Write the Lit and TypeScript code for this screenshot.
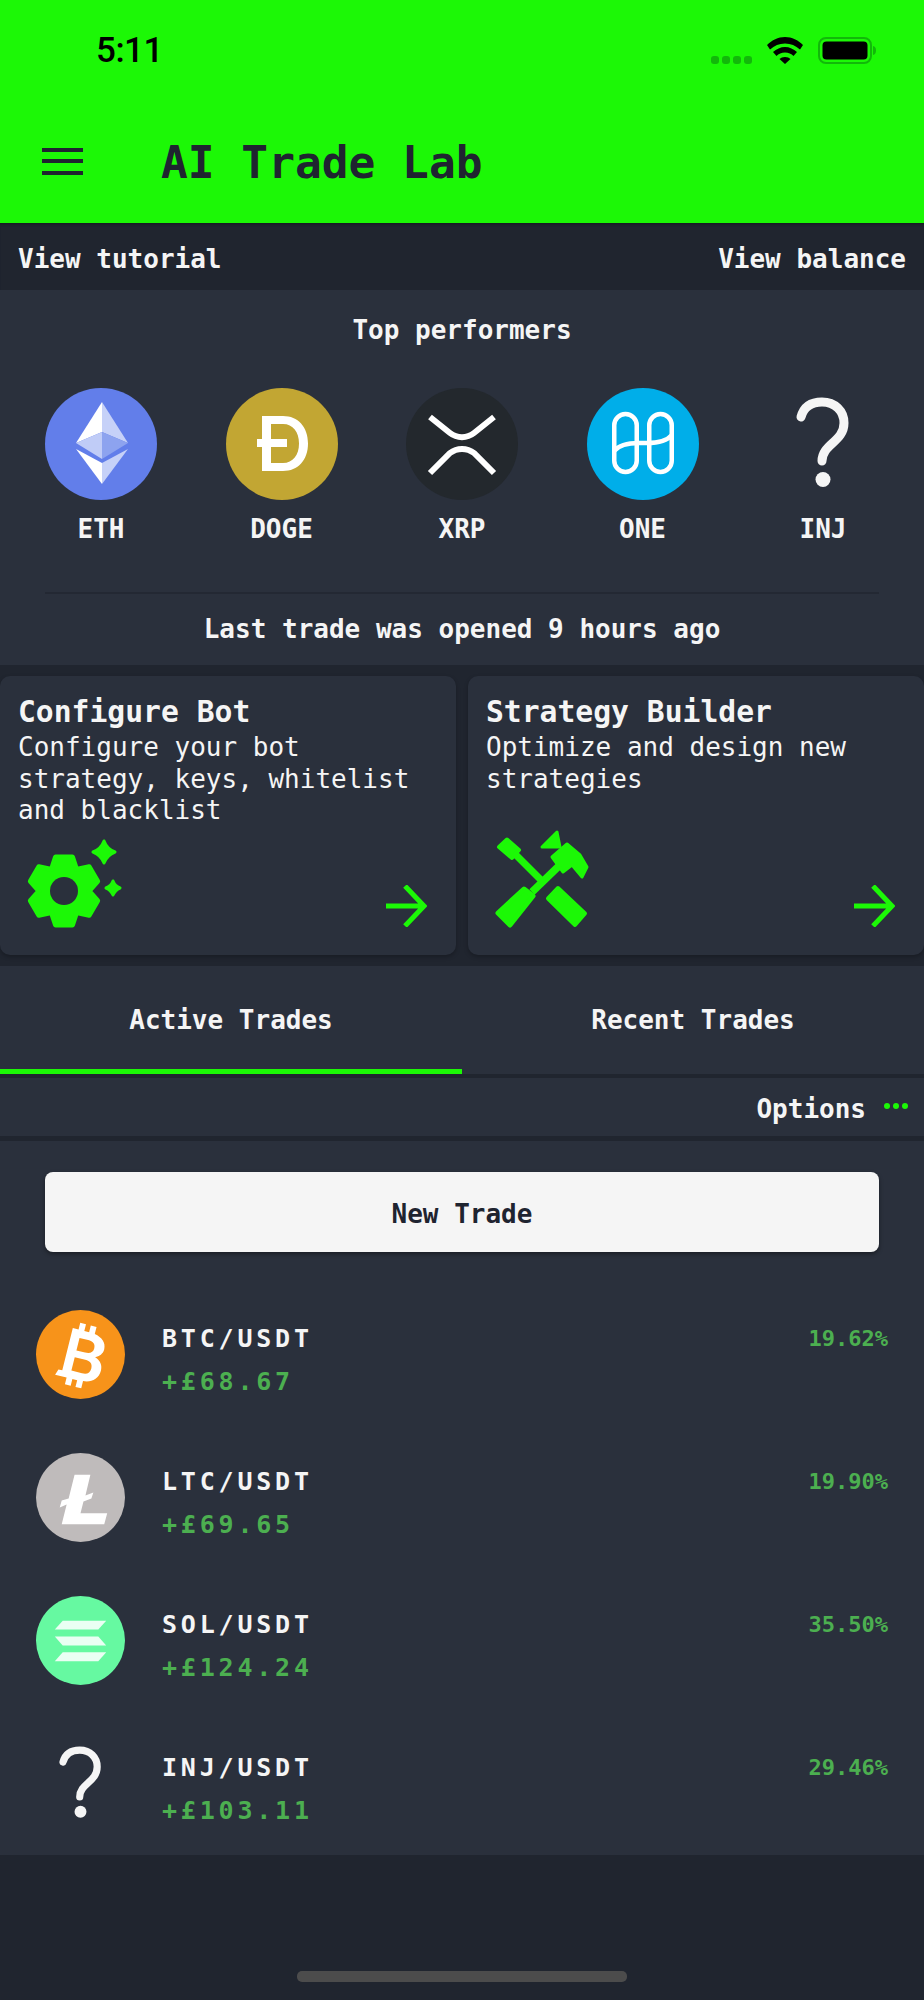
import { LitElement, html, css, svg, unsafeCSS } from "lit";
import { customElement } from "lit/decorators.js";

const GREEN = "#1cf806";
const G = unsafeCSS(GREEN);

const eth = svg`<svg viewBox="0 0 112 112" class="coin"><circle cx="56" cy="56" r="56" fill="#627eea"/>
<path d="M57 14L31 55l26-11z" fill="#fff"/><path d="M57 14v30l26 11z" fill="#c6d1f8"/>
<path d="M31 55l26-11v27z" fill="#c0ccf7"/><path d="M83 55L57 44v27z" fill="#8da3ef"/>
<path d="M31 61l26 14v21z" fill="#fff"/><path d="M83 61L57 75v21z" fill="#c6d1f8"/></svg>`;
const doge = svg`<svg viewBox="0 0 112 112" class="coin"><circle cx="56" cy="56" r="56" fill="#c2a633"/>
<path fill="#fff" fill-rule="evenodd" d="M36 28h21c15 0 25 11 25 27.500S72 83 57 83H36V59h-5v-8h5zm9 8v15h16v8H45v16h12c10 0 16-8 16-19.500S67 36 57 36z"/></svg>`;
const xrp = svg`<svg viewBox="0 0 112 112" class="coin"><circle cx="56" cy="56" r="56" fill="#23282d"/>
<path fill="none" stroke="#fff" stroke-width="6" d="M24 29L44 45c7 5.500 17 5.500 24 0L88 29M24 85L44 65c7-5.500 17-5.500 24 0L88 85"/></svg>`;
const one = svg`<svg viewBox="0 0 112 112" class="coin"><circle cx="56" cy="56" r="56" fill="#00aee9"/>
<g fill="none" stroke="#fff" stroke-width="4.500"><rect x="27.250" y="26" width="22.500" height="58" rx="11.250"/><rect x="62.250" y="26" width="22.500" height="58" rx="11.250"/><path d="M27 63c5-6 14-8 25-8h8c11 0 20-2 25-8"/></g></svg>`;
const q = svg`<svg viewBox="0 0 112 112" class="coin"><path fill="none" stroke="#f5f5f5" stroke-width="9" stroke-linecap="round" d="M34 29C37 18 45 14 55 14c13 0 22 9 22 21 0 19-22 21-22 38"/><circle cx="56" cy="91.500" r="7.500" fill="#f5f5f5"/></svg>`;
const btc = svg`<svg viewBox="0 0 90 90" class="coin"><circle cx="45" cy="45" r="45" fill="#f7931a"/>
<g transform="rotate(14 45 45)"><path fill="#fff" fill-rule="evenodd" d="M31 21h6v-7h6v7h5v-7h6v7.500c8 1.500 13 6 13 12.500 0 5-3 8-7 10 6 2 9 6 9 12 0 9-7 14-15 14.500V78h-6v-7h-5v7h-6v-7H25l2-6h4zm9 8v13h9c5 0 8-2 8-6.500S54 29 49 29zm0 20v14h11c5 0 8-2 8-7s-3-7-8-7z"/></g></svg>`;
const ltc = svg`<svg viewBox="0 0 90 90" class="coin"><circle cx="45" cy="45" r="45" fill="#bfbbbb"/>
<path fill="#fff" d="M39 22h16l-5 21 8-3-2 6-8 3-3 12h27l-3 11H26l5-20-7 3 2-7 7-2z"/></svg>`;
const sol = svg`<svg viewBox="0 0 90 90" class="coin"><circle cx="45" cy="45" r="45" fill="#66f9a1"/>
<g fill="#eafff3"><path d="M27 25h44l-8 9H19z"/><path d="M19 41h44l8 9H27z"/><path d="M27 57h44l-8 9H19z"/></g></svg>`;

const gearPoints = (() => {
  const pts: string[] = [];
  const p = (r: number, deg: number) => {
    const a = (deg * Math.PI) / 180;
    pts.push(`${(38 + r * Math.cos(a)).toFixed(2)},${(62 + r * Math.sin(a)).toFixed(2)}`);
  };
  for (let k = 0; k < 6; k++) {
    const c = -90 + 60 * k;
    p(25, c - 30);
    p(35, c - 14);
    p(35, c + 14);
  }
  return pts.join(" ");
})();

const gear = svg`<svg viewBox="0 0 100 100" width="100" height="100" class="ico">
<polygon points="${gearPoints}" fill="${GREEN}" stroke="${GREEN}" stroke-width="5" stroke-linejoin="round"/>
<circle cx="38" cy="62" r="14" fill="#2a303c"/>
<g fill="${GREEN}" stroke="${GREEN}" stroke-width="3" stroke-linejoin="round">
<path d="M78 12Q81 20 89 23Q81 26 78 34Q75 26 67 23Q75 20 78 12z"/>
<path d="M87 52Q89 57 94 59Q89 61 87 66Q85 61 80 59Q85 57 87 52z"/></g></svg>`;

const tools = svg`<svg viewBox="0 0 100 100" width="100" height="100" class="ico">
<g fill="${GREEN}" stroke="${GREEN}" stroke-linejoin="round">
<path stroke-width="4" d="M5 18l8-7.500L25 21l-7 8z"/>
<line x1="20" y1="24" x2="48" y2="52" stroke-width="7"/>
<path stroke-width="5" d="M4 84L30 60l9 7L16 96z"/>
<line x1="38" y1="63" x2="68" y2="34" stroke-width="7.500"/>
<path stroke-width="3" d="M58 28L73 15l13 11 7 12-5 10-10-12-9 7z"/>
<path stroke-width="3" d="M48 18L63 3l3 15z"/>
<path stroke-width="4" d="M54 69.500L64 59l27 25.500L81 96z"/>
</g></svg>`;

const arrow = html`<svg viewBox="0 0 41 42" width="41" height="42" class="arrow"><path fill="none" stroke="${GREEN}" stroke-width="5" d="M0 21h38M19 1l19 20-19 20"/></svg>`;

const performers = [["ETH", eth], ["DOGE", doge], ["XRP", xrp], ["ONE", one], ["INJ", q]] as const;
const trades = [
  ["BTC/USDT", "+£68.67", "19.62%", btc],
  ["LTC/USDT", "+£69.65", "19.90%", ltc],
  ["SOL/USDT", "+£124.24", "35.50%", sol],
  ["INJ/USDT", "+£103.11", "29.46%", q],
] as const;

@customElement("app-root")
export class AppRoot extends LitElement {
  static styles = css`
    :host { display: block; width: 924px; height: 2000px; background: #20252f; font-family: "DejaVu Sans Mono", monospace; color: #f5f5f5; overflow: hidden; position: relative; }
    * { box-sizing: border-box; }
    .header { height: 223px; background: ${G}; color: #1f2430; display: flex; flex-direction: column; }
    .status { height: 123px; padding: 31px 48px 0 96px; display: flex; align-items: flex-start; justify-content: space-between; color: #000; }
    .time { font: 500 35px/40px Roboto, sans-serif; letter-spacing: -.5px; }
    .sys { display: flex; align-items: center; gap: 15px; height: 40px; margin-top: -1px; }
    .dots { display: flex; gap: 3px; margin-top: 20px; }
    .dots i { width: 8px; height: 8px; border-radius: 3px; background: #12b80a; display: block; }
    .bar { display: flex; align-items: center; padding: 0 0 0 42px; height: 78px; }
    .menu { width: 41px; height: 27px; display: flex; flex-direction: column; justify-content: space-between; margin-right: 78px; margin-top: -2px; }
    .menu i { display: block; height: 4px; background: #1f2430; }
    .title { font-size: 44.500px; font-weight: 700; line-height: 1; margin-top: 3px; }
    .top { height: 67px; display: flex; justify-content: space-between; align-items: center; padding: 5px 18px 0; font-size: 26px; font-weight: 700; line-height: 1; box-shadow: inset 0 3px 3px -2px #14181f; }
    .panel { background: #2a303c; }
    .perf { height: 375px; display: flex; flex-direction: column; align-items: center; }
    .h { font-size: 26px; font-weight: 700; margin-top: 24px; line-height: 32px; }
    .coins { width: 100%; display: grid; grid-template-columns: repeat(5, 112px); justify-content: space-between; padding: 0 45px; margin-top: 42px; }
    .pc { display: flex; flex-direction: column; align-items: center; }
    .coin { display: block; width: 100%; aspect-ratio: 1; }
    .pc .lab { margin-top: 10px; font-size: 26px; font-weight: 700; line-height: 38px; }
    .rule { width: 834px; height: 2px; background: #232833; margin-top: 44px; }
    .last { font-size: 26px; font-weight: 700; margin-top: 19px; line-height: 32px; }
    .cards { display: grid; grid-template-columns: 456px 456px; gap: 12px; padding: 11px 0; }
    .card { height: 279px; position: relative; background: #2a303c; border-radius: 10px; box-shadow: 0 2px 4px rgba(0,0,0,.25); padding: 18px 18px 0; }
    .card h2 { margin: 0; font-size: 29.700px; line-height: 36px; font-weight: 700; }
    .card p { margin: 2px 0 0; font-size: 26px; line-height: 31.500px; white-space: pre-line; }
    .ico { position: absolute; left: 26px; bottom: 26px; }
    .arrow { position: absolute; right: 29px; bottom: 28px; }
    .tabs { display: grid; grid-template-columns: 1fr 1fr; height: 108px; background: #2a303c; }
    .tab { position: relative; display: flex; align-items: center; justify-content: center; font-size: 26px; font-weight: 700; padding-top: 0; }
    .tab.on::after { content: ""; position: absolute; left: 0; right: 0; bottom: 0; height: 5px; background: ${G}; }
    .opt { margin-top: 4px; height: 58px; background: #2a303c; display: flex; align-items: center; justify-content: flex-end; padding: 3px 16px 0 0; gap: 18px; font-size: 26px; font-weight: 700; }
    .more { display: flex; gap: 3px; margin-top: -5px; }
    .more i { width: 6px; height: 6px; border-radius: 50%; background: ${G}; display: block; }
    .list { margin-top: 5px; height: 714px; background: #2a303c; padding-top: 31px; }
    .btn { margin: 0 45px; height: 80px; padding-top: 4px; background: #f5f5f5; color: #1f2430; border-radius: 8px; display: flex; align-items: center; justify-content: center; font-size: 26px; font-weight: 700; box-shadow: 0 2px 4px rgba(0,0,0,.4); }
    .rows { margin-top: 58px; display: flex; flex-direction: column; gap: 54px; padding: 0 36px; }
    .row { display: grid; grid-template-columns: 89px 1fr auto; column-gap: 37px; height: 89px; }
    .row .coin { width: 89px; }
    .pair { font-size: 25px; letter-spacing: 3.800px; line-height: 30px; margin-top: 14px; font-weight: 700; }
    .gain { font-size: 25px; letter-spacing: 3.800px; line-height: 30px; margin-top: 13px; color: #4caf50; font-weight: 700; }
    .pct { font-size: 22px; color: #4caf50; line-height: 30px; margin-top: 14px; font-weight: 700; }
    .home { position: absolute; left: 297px; top: 1971px; width: 330px; height: 11px; border-radius: 5px; background: #4c4c4c; }
  `;

  render() {
    return html`
      <div class="header">
        <div class="status">
          <div class="time">5:11</div>
          <div class="sys">
            <div class="dots"><i></i><i></i><i></i><i></i></div>
            <svg width="36" height="27" viewBox="0 0 36 27"><path d="M18 0c7 0 13 3 18 8l-3 4.500C28.500 8.500 24 6.500 18 6.500S7.500 8.500 3 12.500L0 8C5 3 11 0 18 0zm0 10c4.500 0 8.500 2 12 5l-3.500 4c-2-2-5-3.500-8.500-3.500S11.500 17 9.500 19L6 15c3.500-3 7.500-5 12-5zm0 10c2.500 0 4 .8 5.500 2L18 27l-5.500-5c1.500-1.200 3-2 5.500-2z" fill="#000"/></svg>
            <svg width="58" height="27" viewBox="0 0 58 27"><rect x="1" y="1" width="52" height="25" rx="7" fill="none" stroke="#12b80a" stroke-width="2"/><rect x="4.500" y="4.500" width="45" height="18" rx="4" fill="#000"/><path d="M55 9c2 .5 3 2 3 4.500s-1 4-3 4.500z" fill="#12b80a"/></svg>
          </div>
        </div>
        <div class="bar">
          <div class="menu"><i></i><i></i><i></i></div>
          <div class="title">AI Trade Lab</div>
        </div>
      </div>
      <div class="top"><span>View tutorial</span><span>View balance</span></div>
      <section class="panel perf">
        <div class="h">Top performers</div>
        <div class="coins">
          ${performers.map(([n, c]) => html`<div class="pc">${c}<div class="lab">${n}</div></div>`)}
        </div>
        <div class="rule"></div>
        <div class="last">Last trade was opened 9 hours ago</div>
      </section>
      <div class="cards">
        <div class="card"><h2>Configure Bot</h2><p>Configure your bot
strategy, keys, whitelist
and blacklist</p>${gear}${arrow}</div>
        <div class="card"><h2>Strategy Builder</h2><p>Optimize and design new
strategies</p>${tools}${arrow}</div>
      </div>
      <div class="tabs"><div class="tab on">Active Trades</div><div class="tab">Recent Trades</div></div>
      <div class="opt"><span>Options</span><div class="more"><i></i><i></i><i></i></div></div>
      <section class="list">
        <div class="btn">New Trade</div>
        <div class="rows">
          ${trades.map(([p, g, pc, c]) => html`<div class="row">${c}<div><div class="pair">${p}</div><div class="gain">${g}</div></div><div class="pct">${pc}</div></div>`)}
        </div>
      </section>
      <div class="home"></div>
    `;
  }
}
